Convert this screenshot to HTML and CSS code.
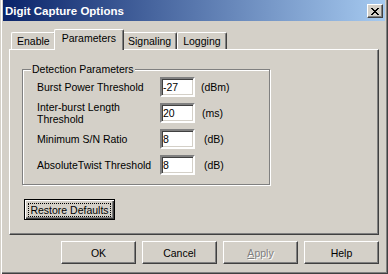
FILE: index.html
```html
<!DOCTYPE html>
<html lang="en">
<head>
    <meta charset="UTF-8">
    <title>Digit Capture Options</title>
    <link rel="stylesheet" href="styles.css">
</head>
<body>
    <div class="window">
        <div class="titlebar">
            <span class="title">Digit Capture Options</span>
            <button class="close" title="Close">
                <svg width="8" height="7" viewBox="0 0 8 7" shape-rendering="crispEdges">
                    <path d="M0 0h2v1H0zM6 0h2v1H6zM1 1h2v1H1zM5 1h2v1H5zM2 2h4v1H2zM3 3h2v1H3zM2 4h4v1H2zM1 5h2v1H1zM5 5h2v1H5zM0 6h2v1H0zM6 6h2v1H6z" fill="#000"/>
                </svg>
            </button>
        </div>

        <div class="tabs">
            <div class="tab">Enable</div>
            <div class="tab active">Parameters</div>
            <div class="tab">Signaling</div>
            <div class="tab">Logging</div>
        </div>

        <div class="panel">
            <fieldset class="group">
                <legend>Detection Parameters</legend>
                <div class="fields">
                    <label for="burst-power">Burst Power Threshold</label>
                    <input type="text" id="burst-power" value="-27">
                    <span class="unit">(dBm)</span>

                    <label for="inter-burst">Inter-burst Length<br>Threshold</label>
                    <input type="text" id="inter-burst" value="20">
                    <span class="unit unit-ms">(ms)</span>

                    <label for="sn-ratio">Minimum S/N Ratio</label>
                    <input type="text" id="sn-ratio" value="8">
                    <span class="unit unit-db">(dB)</span>

                    <label for="twist">AbsoluteTwist Threshold</label>
                    <input type="text" id="twist" value="8">
                    <span class="unit unit-db">(dB)</span>
                </div>
            </fieldset>

            <button class="btn restore"><span class="focus">Restore Defaults</span></button>
        </div>

        <div class="actions">
            <button class="btn">OK</button>
            <button class="btn">Cancel</button>
            <button class="btn" disabled><u>A</u>pply</button>
            <button class="btn">Help</button>
        </div>
    </div>
</body>
</html>
```

FILE: styles.css
```css
body {
    margin: 0;
    font-family: "Liberation Sans", Arial, sans-serif;
    font-size: 10.5px;
    color: #000;
    background-color: #d4d0c8;
}
.window {
    width: 388px;
    height: 274px;
    box-sizing: border-box;
    padding: 0 3px;
    background-color: #d4d0c8;
    box-shadow: inset 1px 0 #d4d0c8, inset 2px 0 #fff, inset -1px -1px #404040, inset -2px -2px #808080;
}
.titlebar {
    height: 21px;
    display: flex;
    align-items: center;
    justify-content: space-between;
    padding: 1px 2px 0 2px;
    box-sizing: border-box;
    background: linear-gradient(to right, #0a246a, #a6caf0);
}
.title {
    color: #fff;
    font-weight: bold;
    font-size: 11.5px;
}
.close {
    width: 16px;
    height: 14px;
    padding: 0;
    display: flex;
    align-items: center;
    justify-content: center;
    background-color: #d4d0c8;
    border: 1px solid;
    border-color: #fff #404040 #404040 #fff;
    box-shadow: inset -1px -1px #808080;
    box-sizing: border-box;
}

/* tabs */
.tabs {
    height: 28px;
    display: flex;
    align-items: flex-end;
    padding-left: 8px;
}
.tab {
    height: 17px;
    line-height: 16px;
    padding: 0 5px;
    box-sizing: border-box;
    border-top: 1px solid #fff;
    border-left: 1px solid #fff;
    border-right: 1px solid #404040;
    border-radius: 2px 2px 0 0;
    box-shadow: inset -1px 0 #808080;
    background-color: #d4d0c8;
}
.tab.active {
    position: relative;
    z-index: 1;
    height: 21px;
    line-height: 17px;
    margin: 0 -2px -1px -2px;
    padding: 0 7px;
}

.panel {
    height: 186px;
    margin: 0 6px;
    padding: 13px 12px 0 12px;
    box-sizing: border-box;
    border: 1px solid;
    border-color: #fff #404040 #404040 #fff;
    box-shadow: inset -1px -1px #808080;
}
.group {
    width: 248px;
    margin: 0;
    padding: 1px 0 9px 14px;
    box-sizing: border-box;
    border: 1px solid #808080;
    box-shadow: inset 1px 1px #fff, 1px 1px #fff;
}
.group legend {
    margin-left: -6px;
    padding: 0 1px;
    line-height: 13px;
    background-color: #d4d0c8;
}
.fields {
    display: grid;
    grid-template-columns: 117px 35px auto;
    grid-auto-rows: 20px;
    row-gap: 6px;
    column-gap: 6px;
    align-items: center;
}
.fields label {
    line-height: 12px;
    white-space: nowrap;
}
.fields input {
    width: 35px;
    height: 20px;
    box-sizing: border-box;
    padding: 0 1px;
    font: inherit;
    border: 2px solid;
    border-color: #808080 #fff #fff #808080;
    box-shadow: inset 1px 1px #404040, inset -1px -1px #d4d0c8;
    background-color: #fff;
    outline: none;
}
.unit-ms {
    padding-left: 1px;
}
.unit-db {
    padding-left: 3px;
}

/* buttons */
.btn {
    font: inherit;
    color: #000;
    width: 75px;
    height: 23px;
    padding: 0;
    background-color: #d4d0c8;
    border: 1px solid;
    border-color: #fff #404040 #404040 #fff;
    box-shadow: inset -1px -1px #808080;
    box-sizing: border-box;
}
.btn:disabled {
    color: #808080;
    text-shadow: 1px 1px #fff;
}
.restore {
    width: 91px;
    height: 21px;
    margin: 14px 0 0 2px;
    border-color: #000;
    box-shadow: inset 1px 1px #fff, inset -1px -1px #404040, inset -2px -2px #808080;
}
.focus {
    display: inline-block;
    padding: 0 1px;
    line-height: 12px;
    outline: 1px dotted #000;
}
.actions {
    display: flex;
    justify-content: flex-end;
    gap: 6px;
    margin-top: 6px;
    padding-right: 6px;
}
```
